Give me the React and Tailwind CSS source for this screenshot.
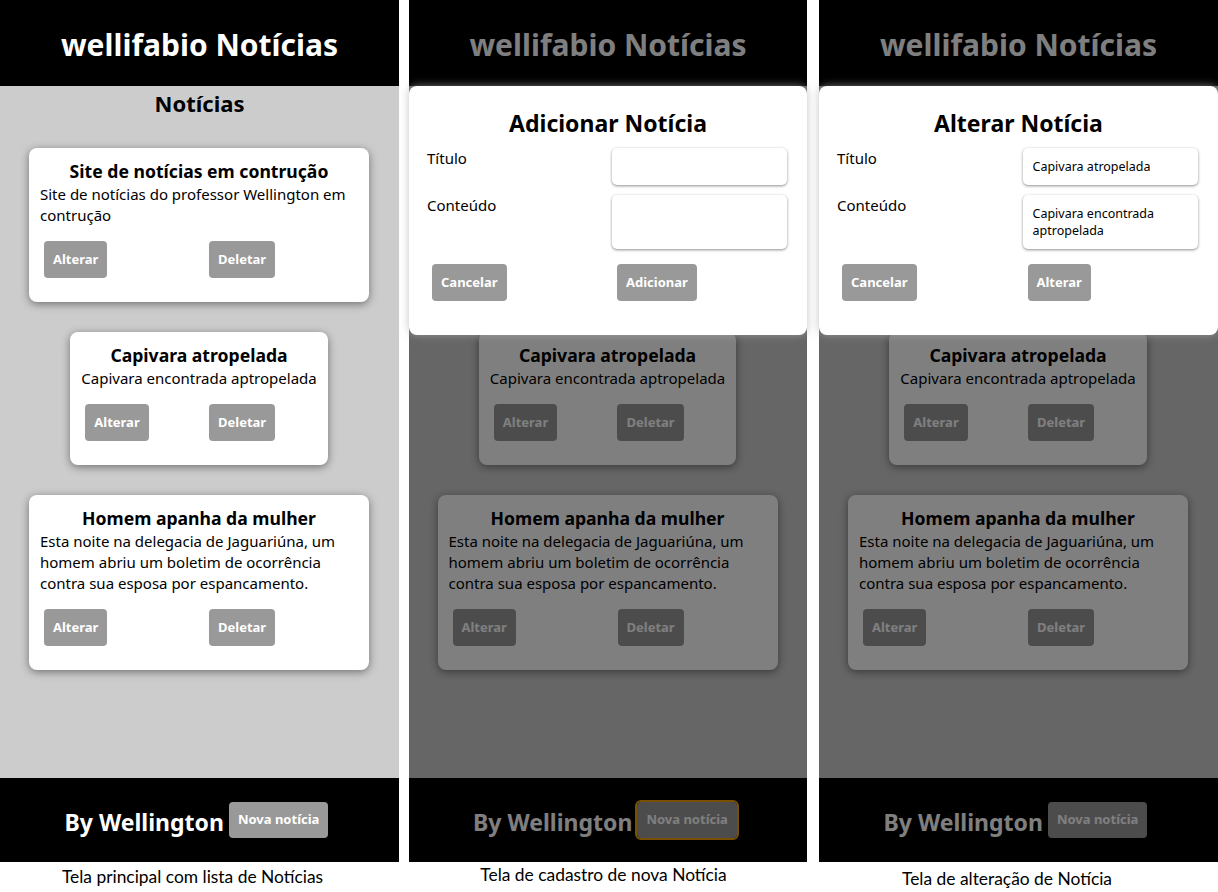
const NOTICIAS = [
    {
        titulo: 'Site de notícias em contrução',
        conteudo: 'Site de notícias do professor Wellington em contrução'
    },
    {
        titulo: 'Capivara atropelada',
        conteudo: 'Capivara encontrada aptropelada'
    },
    {
        titulo: 'Homem apanha da mulher',
        conteudo: 'Esta noite na delegacia de Jaguariúna, um homem abriu um boletim de ocorrência contra sua esposa por espancamento.'
    }
];

const FONT = "font-['Noto_Sans',sans-serif]";

function Botao({ children, className = '' }) {
    return (
        <button
            className={`h-[37px] px-[9px] rounded-[4px] bg-[#999999] text-white text-[13px] font-bold leading-none ${className}`}
        >
            {children}
        </button>
    );
}

function Card({ noticia, oculto }) {
    return (
        <div
            className={`w-fit max-w-[340px] mx-auto bg-white rounded-[8px] shadow-[0_2px_8px_rgba(0,0,0,0.45)] px-[11px] pt-[10px] pb-[24px] ${oculto ? 'invisible' : ''}`}
        >
            <h3 className="text-center text-[17.6px] font-bold leading-[26px] text-black">
                {noticia.titulo}
            </h3>
            <p className="text-[15px] leading-[21px] text-black">{noticia.conteudo}</p>
            <div className="grid grid-cols-2 mt-[15px]">
                <div>
                    <Botao className="ml-[4px]">Alterar</Botao>
                </div>
                <div>
                    <Botao className="ml-[10px]">Deletar</Botao>
                </div>
            </div>
        </div>
    );
}

function Modal({ titulo, acao, valores }) {
    return (
        <div className="absolute top-[86px] left-0 right-0 h-[249px] bg-white rounded-[8px] shadow-[0_0_8px_rgba(170,170,170,0.7)] px-[18px] pt-[21px]">
            <h2 className="text-center text-[23px] font-bold leading-[32px] text-black">{titulo}</h2>
            <div className="grid grid-cols-2 gap-y-[10px] mt-[9px]">
                <label className="text-[15px] leading-[21px] text-black">Título</label>
                <input
                    readOnly
                    value={valores ? valores.titulo : ''}
                    className="ml-[4px] w-[175px] h-[37px] rounded-[5px] bg-white shadow-[0_1px_3px_rgba(0,0,0,0.45)] px-[10px] text-[12.5px] text-black outline-none"
                />
                <label className="text-[15px] leading-[21px] text-black">Conteúdo</label>
                <textarea
                    readOnly
                    value={valores ? valores.conteudo : ''}
                    className="ml-[4px] w-[175px] h-[54px] resize-none rounded-[5px] bg-white shadow-[0_1px_3px_rgba(0,0,0,0.45)] px-[10px] pt-[10px] text-[12.5px] leading-[17px] text-black outline-none"
                />
            </div>
            <div className="grid grid-cols-2 mt-[15px]">
                <div>
                    <Botao className="ml-[5px]">Cancelar</Botao>
                </div>
                <div>
                    <Botao className="ml-[9px]">{acao}</Botao>
                </div>
            </div>
        </div>
    );
}

function Tela({ largura, modal, focoNova }) {
    return (
        <div className={`relative flex flex-col h-[862px] ${largura}`}>
            <header className="h-[86px] bg-black flex items-center justify-center pt-[2px]">
                <h1 className="text-white text-[30px] font-bold">wellifabio Notícias</h1>
            </header>
            <main className="flex-1 bg-[#cccccc] flex flex-col">
                <h2 className={`text-center text-[22px] font-bold leading-[34px] text-black ${modal ? 'invisible' : ''}`}>
                    Notícias
                </h2>
                <div className="flex flex-col gap-[30px] mt-[28px] pr-[1px]">
                    {NOTICIAS.map((n, i) => (
                        <Card key={n.titulo} noticia={n} oculto={modal && i === 0} />
                    ))}
                </div>
            </main>
            <footer className="h-[84px] bg-black flex items-center justify-center gap-[5px] pr-[6px]">
                <span className="text-white text-[23px] font-bold pt-[5px]">By Wellington</span>
                <button
                    className={`h-[36px] px-[9px] rounded-[4px] bg-[#999999] text-white text-[13px] font-bold ${focoNova ? 'outline-2 outline-offset-0 outline-[#f0a000]' : ''}`}
                >
                    Nova notícia
                </button>
            </footer>
            {modal && <div className="absolute inset-0 bg-black/50" />}
            {modal}
        </div>
    );
}

export default function App() {
    return (
        <div className={`w-[1218px] h-[892px] bg-white flex overflow-hidden ${FONT}`}>
            <div className="w-[399px]">
                <Tela largura="w-[399px]" />
                <p className="font-['Lato',sans-serif] text-[17.4px] leading-[20px] text-black text-center pt-[5px] pr-[14px]">
                    Tela principal com lista de Notícias
                </p>
            </div>
            <div className="w-[398px] ml-[10px]">
                <Tela
                    largura="w-[398px]"
                    focoNova
                    modal={<Modal titulo="Adicionar Notícia" acao="Adicionar" />}
                />
                <p className="font-['Lato',sans-serif] text-[17.4px] leading-[20px] text-black text-center pt-[3px] pr-[9px]">
                    Tela de cadastro de nova Notícia
                </p>
            </div>
            <div className="w-[399px] ml-[12px]">
                <Tela
                    largura="w-[399px]"
                    modal={
                        <Modal
                            titulo="Alterar Notícia"
                            acao="Alterar"
                            valores={{ titulo: 'Capivara atropelada', conteudo: 'Capivara encontrada aptropelada' }}
                        />
                    }
                />
                <p className="font-['Lato',sans-serif] text-[17.4px] leading-[20px] text-black text-center pt-[7px] pr-[23px]">
                    Tela de alteração de Notícia
                </p>
            </div>
        </div>
    );
}
